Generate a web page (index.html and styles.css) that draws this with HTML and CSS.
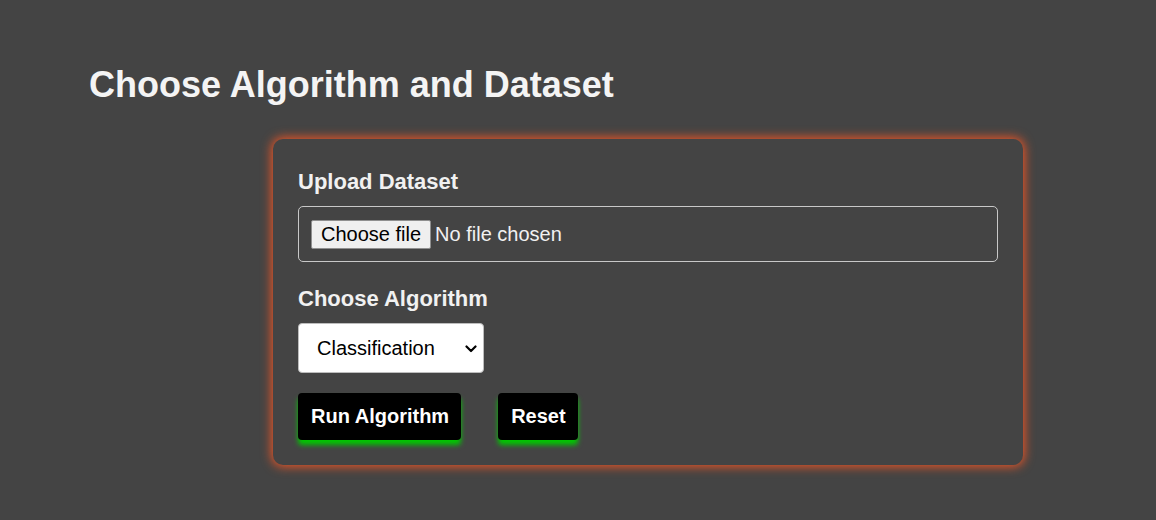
FILE: index.html
```html
<!DOCTYPE html>
<html lang="en">
<head>
<meta charset="utf-8">
<title>Choose Algorithm and Dataset</title>
<link rel="stylesheet" href="styles.css">
</head>
<body>
<main class="page">
  <h1 class="title">Choose Algorithm and Dataset</h1>
  <form class="card">
    <span class="label">Upload Dataset</span>
    <label class="file">
      <input class="file-input" type="file">
      <span class="file-btn">Choose file</span>
      <span class="file-name">No file chosen</span>
    </label>
    <label class="label" for="algo">Choose Algorithm</label>
    <div class="select-wrap">
      <select class="select" id="algo">
        <option>Classification</option>
        <option>Regression</option>
        <option>Clustering</option>
      </select>
      <svg class="chevron" width="12" height="8" viewBox="0 0 12 8" aria-hidden="true">
        <path d="M1.5 1.5 L6 6 L10.5 1.5" fill="none" stroke="#000" stroke-width="2.2" stroke-linecap="round" stroke-linejoin="round"/>
      </svg>
    </div>
    <div class="actions">
      <button class="btn" type="button">Run Algorithm</button>
      <button class="btn" type="reset">Reset</button>
    </div>
  </form>
</main>
</body>
</html>
```
FILE: styles.css
```css
html, body {
  margin: 0;
  padding: 0;
  background: #444444;
  font-family: "Liberation Sans", Arial, sans-serif;
  color: #f1f1f1;
}

.page {
  padding: 65px 89px 40px;
}

.title {
  margin: 0;
  font-size: 36px;
  font-weight: bold;
  line-height: 40px;
  color: #f4f4f4;
}

.card {
  box-sizing: border-box;
  width: 750px;
  margin: 34px 0 0 184px;
  padding: 30px 25px 25px;
  border-radius: 10px;
  background: #444444;
  box-shadow: 0 0 11px 1px #ff5722;
  display: flex;
  flex-direction: column;
  align-items: flex-start;
}

.label {
  display: block;
  font-size: 22px;
  font-weight: bold;
  line-height: 25px;
  margin-bottom: 12px;
  color: #f1f1f1;
}

.file {
  box-sizing: border-box;
  width: 700px;
  height: 56px;
  padding: 0 12px;
  margin: 0 0 24px;
  border: 1px solid #c8c8c8;
  border-radius: 5px;
  display: flex;
  align-items: center;
  gap: 4px;
  font-size: 20px;
  color: #f1f1f1;
  cursor: pointer;
}

.file-input {
  display: none;
}

.file-btn {
  box-sizing: border-box;
  height: 29px;
  padding: 0 9px;
  display: flex;
  align-items: center;
  border: 1px solid #8f8f8f;
  border-radius: 2px;
  background: #efefef;
  color: #000;
}

.file-name {
  color: #f1f1f1;
}

.select-wrap {
  position: relative;
  margin: 0 0 20px;
}

.select {
  box-sizing: border-box;
  width: 186px;
  height: 50px;
  padding: 0 30px 0 18px;
  border: 1px solid #bdbdbd;
  border-radius: 4px;
  background: #ffffff;
  color: #000;
  font-family: "Liberation Sans", Arial, sans-serif;
  font-size: 20px;
  appearance: none;
  -webkit-appearance: none;
  display: block;
}

.chevron {
  position: absolute;
  right: 7px;
  top: 22px;
  pointer-events: none;
}

.actions {
  display: flex;
  gap: 37px;
}

.btn {
  height: 47px;
  padding: 0 12px 0 13px;
  border: none;
  border-radius: 4px;
  background: #000000;
  color: #ffffff;
  font-family: "Liberation Sans", Arial, sans-serif;
  font-size: 20px;
  font-weight: bold;
  box-shadow: 0 5px 5px rgba(0, 200, 0, 1);
  cursor: pointer;
}
```
